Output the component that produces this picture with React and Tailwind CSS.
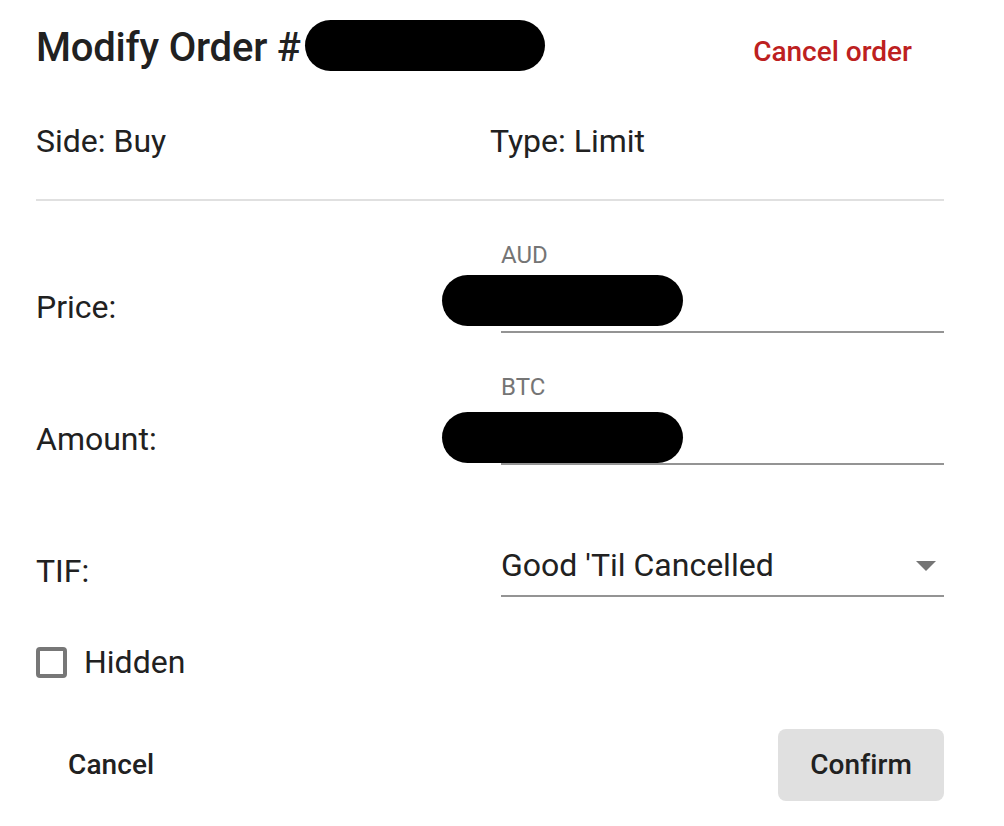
import React from "react";

const Redacted = ({ className }) => (
  <div className={"bg-black rounded-full " + className}></div>
);

const Field = ({ label, children }) => (
  <div className="flex flex-col pl-[11px]">
    <div className="h-[24px] text-[24px] leading-[24px] text-[#757575]">{label}</div>
    <div className="relative h-[66px] border-b-2 border-[#949494]">{children}</div>
  </div>
);

const Row = ({ title, children }) => (
  <div className="grid grid-cols-2 h-[90px]">
    <div className="pt-[40px] text-[32px] leading-[48px]">{title}</div>
    {children}
  </div>
);

const App = () => {
  return (
    <div className="w-[1004px] h-[826px] bg-white pl-[36px] pr-[60px] pt-[16px] font-['Roboto','Liberation_Sans',sans-serif] text-[#212121]">
      <div className="flex h-[64px] items-center justify-between">
        <div className="flex items-center">
          <h2 className="text-[40px] leading-[64px] font-medium tracking-[-0.2px]">Modify Order #</h2>
          <Redacted className="ml-[4px] mb-[5px] w-[240px] h-[51px]" />
        </div>
        <button className="mt-[8px] mr-[32px] text-[28px] font-medium text-[#bd2020]">
          Cancel order
        </button>
      </div>

      <div className="mt-[37px] grid grid-cols-2 h-[48px] text-[32px] leading-[48px]">
        <div>Side: Buy</div>
        <div>Type: Limit</div>
      </div>

      <div className="mt-[34px] h-[2px] bg-[#e0e0e0]"></div>

      <div className="mt-[42px] flex flex-col gap-[42px]">
        <Row title="Price:">
          <Field label="AUD">
            <Redacted className="absolute left-[-59px] top-[8px] w-[241px] h-[51px]" />
          </Field>
        </Row>
        <Row title="Amount:">
          <Field label="BTC">
            <Redacted className="absolute left-[-59px] top-[13px] w-[241px] h-[51px]" />
          </Field>
        </Row>
        <Row title="TIF:">
          <Field label="">
            <div className="pt-[2px] text-[32px] leading-[64px]">Good 'Til Cancelled</div>
            <svg className="absolute right-[8px] top-[30px]" width="20" height="10" viewBox="0 0 20 10">
              <path d="M0 0 L10 10 L20 0 Z" fill="#757575" />
            </svg>
          </Field>
        </Row>
      </div>

      <div className="mt-[41px] flex h-[48px] items-center">
        <div className="w-[31px] h-[31px] rounded-[4px] border-[4px] border-[#777777]"></div>
        <span className="ml-[17px] text-[32px] leading-[48px]">Hidden</span>
      </div>

      <div className="mt-[43px] flex h-[72px] items-center justify-between">
        <button className="h-[72px] px-[32px] text-[28px] font-medium tracking-[0.1px]">Cancel</button>
        <button className="h-[72px] px-[32px] rounded-[8px] bg-[#e0e0e0] text-[28px] font-medium tracking-[0.1px]">
          Confirm
        </button>
      </div>
    </div>
  );
};

export default App;
